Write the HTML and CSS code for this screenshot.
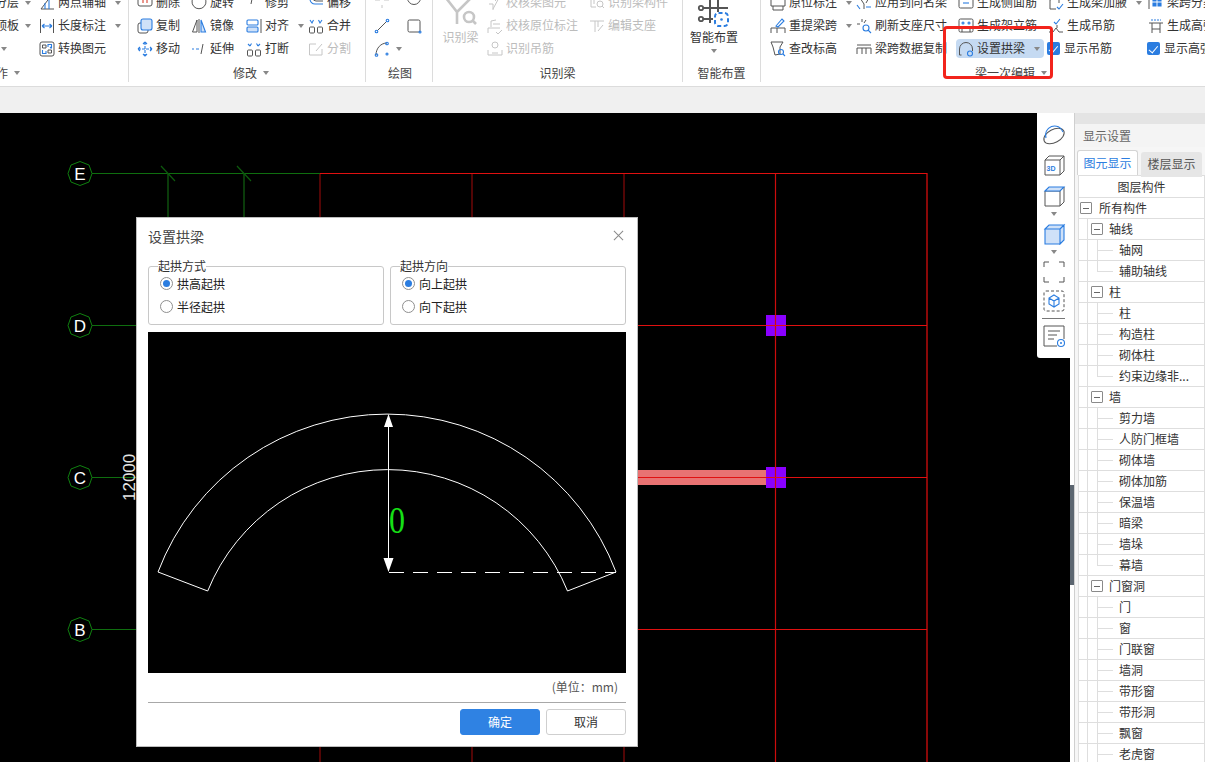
FILE: index.html
```html
<!DOCTYPE html>
<html lang="zh-CN">
<head>
<meta charset="utf-8">
<title>设置拱梁</title>
<link rel="stylesheet" href="styles.css">
</head>
<body>
<header class="ribbon">
  <div class="ribbon-body">

    <section class="group g1">
      <div class="cols">
        <div class="col c1a">
          <div class="item end"><span>分层</span><i class="caret"></i></div>
          <div class="item end"><span>顶板</span><i class="caret"></i></div>
          <div class="item end lone"><i class="caret"></i></div>
        </div>
        <div class="col">
          <div class="item"><svg class="ic" viewBox="0 0 16 16"><path class="s" d="M2 14L12 1M2 14H15"/><path class="b" d="M6 14V8M10 14V5"/></svg><span>两点辅轴</span><i class="caret"></i></div>
          <div class="item"><svg class="ic" viewBox="0 0 16 16"><path class="s" d="M1.500 1V15M14.500 1V15"/><path class="b" d="M3 8H13M3 8L5.500 6M3 8L5.500 10M13 8L10.500 6M13 8L10.500 10"/></svg><span>长度标注</span><i class="caret"></i></div>
          <div class="item"><svg class="ic" viewBox="0 0 16 16"><rect class="s" x="1" y="1" width="14" height="14" rx="2"/><path class="s" d="M3.500 4H7V7H3.500ZM9 9H12.500V12H9Z"/><path class="b" d="M9 6V3.500H12.500V7M11 6L12.500 7.500M7 10V12.500H3.500V9"/></svg><span>转换图元</span></div>
        </div>
      </div>
      <div class="glabel gl1"><span>操作</span><i class="caret"></i></div>
    </section>

    <section class="group g2">
      <div class="cols">
        <div class="col c2a">
          <div class="item"><svg class="ic" viewBox="0 0 16 16"><rect class="s" x="1" y="-3" width="14" height="14" rx="2"/><path class="r" d="M6 0V8M10 0V8"/></svg><span>删除</span></div>
          <div class="item"><svg class="ic" viewBox="0 0 16 16"><rect class="s" x="1" y="5" width="10" height="10" rx="2"/><rect class="b fb" x="4" y="1" width="11" height="11" rx="2"/></svg><span>复制</span></div>
          <div class="item"><svg class="ic" viewBox="0 0 16 16"><path class="b" d="M8 1V15M1 8H15M8 1L6 3M8 1L10 3M8 15L6 13M8 15L10 13M1 8L3 6M1 8L3 10M15 8L13 6M15 8L13 10" stroke-dasharray="3 1"/></svg><span>移动</span></div>
        </div>
        <div class="col c2b">
          <div class="item"><svg class="ic" viewBox="0 0 16 16"><path class="s" d="M4 1A7 7 0 1 0 12 1"/></svg><span>旋转</span></div>
          <div class="item"><svg class="ic" viewBox="0 0 16 16"><path class="s" d="M6 2L1.500 14H6Z"/><path class="b fb" d="M10 2L14.500 14H10Z"/><path class="s" d="M8 1V15"/></svg><span>镜像</span></div>
          <div class="item"><svg class="ic" viewBox="0 0 16 16"><path class="b" d="M1 8H3M5 8H8"/><path class="s" d="M12 3L10 13"/></svg><span>延伸</span></div>
        </div>
        <div class="col c2c">
          <div class="item"><svg class="ic" viewBox="0 0 16 16"><path class="s" d="M1 4H7M6 4L5 9"/><path class="b" d="M9 4H11M13 4H15"/></svg><span>修剪</span></div>
          <div class="item"><svg class="ic" viewBox="0 0 16 16"><rect class="b" x="1" y="2" width="11" height="5" rx="1"/><rect class="b fb" x="1" y="9" width="11" height="5" rx="1"/><path class="s" d="M15 1V15"/></svg><span>对齐</span><i class="caret"></i></div>
          <div class="item"><svg class="ic" viewBox="0 0 16 16"><path class="b" d="M4 5L2 3M4 5L5.500 2.500M12 5L14 3M12 5L10.500 2.500"/><rect class="s" x="1.500" y="9" width="5" height="6" rx="1"/><rect class="s" x="9.500" y="9" width="5" height="6" rx="1"/></svg><span>打断</span></div>
        </div>
        <div class="col">
          <div class="item"><svg class="ic" viewBox="0 0 16 16"><path class="b" d="M2 0V4A5 5 0 0 0 7 9H15"/><path class="s" d="M5 0V3A3 3 0 0 0 8 6H15"/></svg><span>偏移</span></div>
          <div class="item"><svg class="ic" viewBox="0 0 16 16"><path class="b" d="M2 2L4 5L5.500 2M10.500 2L12 5L14 2"/><rect class="s" x="1.500" y="9" width="5" height="6" rx="1"/><rect class="s" x="9.500" y="9" width="5" height="6" rx="1"/></svg><span>合并</span></div>
          <div class="item off"><svg class="ic" viewBox="0 0 16 16"><path class="d" d="M8 3H1.500V14H14V8M8 10L14 3"/></svg><span>分割</span></div>
        </div>
      </div>
      <div class="glabel"><span>修改</span><i class="caret"></i></div>
    </section>

    <section class="group g3">
      <div class="cols">
        <div class="col c3a">
          <div class="item"><svg class="ic" viewBox="0 0 16 16"><path class="d" d="M8 -2V4M8 10V13M1 5H6M10 5H15"/></svg></div>
          <div class="item"><svg class="ic" viewBox="0 0 16 16"><path class="s" d="M3 13L13 3"/><circle class="b" cx="2.500" cy="13.500" r="1.300"/><circle class="b" cx="13.500" cy="2.500" r="1.300"/></svg></div>
          <div class="item"><svg class="ic" viewBox="0 0 16 16"><path class="s" d="M2 14C2 7 7 2 13 2"/><circle class="b" cx="2.500" cy="14" r="1.300"/><circle class="b" cx="13" cy="2.500" r="1.300"/><circle class="b" cx="13" cy="13" r="1"/></svg><i class="caret arc-caret"></i></div>
        </div>
        <div class="col">
          <div class="item"><svg class="ic" viewBox="0 0 16 16"><circle class="s" cx="8" cy="3" r="6.500"/><circle class="b" cx="8" cy="3" r="1"/></svg></div>
          <div class="item"><svg class="ic" viewBox="0 0 16 16"><rect class="s" x="2" y="2" width="12" height="12" rx="1.500"/><circle class="b" cx="14" cy="14" r="1"/></svg></div>
        </div>
      </div>
      <div class="glabel gl3"><span>绘图</span></div>
    </section>

    <section class="group g4">
      <div class="cols">
        <div class="col big c4a off">
          <svg class="big-ic" viewBox="0 0 32 32"><path class="d2" d="M1 6L12 20V32M26 6L12 20"/><circle class="d2" cx="24" cy="25" r="5"/><path class="d2" d="M27.500 28.500L31 32"/></svg>
          <span class="big-label">识别梁</span>
        </div>
        <div class="col c4b off">
          <div class="item"><svg class="ic" viewBox="0 0 16 16"><path class="d" d="M3 0L9 6M13 1L6 14M2 9H6V15"/></svg><span>校核梁图元</span></div>
          <div class="item"><svg class="ic" viewBox="0 0 16 16"><path class="d" d="M1 15V10H13M4 9V3L9 2M6 6H13M9 14L11 16L15 12"/></svg><span>校核原位标注</span></div>
          <div class="item"><svg class="ic" viewBox="0 0 16 16"><circle class="d" cx="8" cy="4" r="3"/><path class="d" d="M1 9V14H15V9M5 12H11"/></svg><span>识别吊筋</span></div>
        </div>
        <div class="col off">
          <div class="item"><svg class="ic" viewBox="0 0 16 16"><path class="d" d="M2 0V12H7M5 0V9"/><circle class="d" cx="11" cy="9" r="3"/><path class="d" d="M13 11L15 13"/></svg><span>识别梁构件</span></div>
          <div class="item"><svg class="ic" viewBox="0 0 16 16"><path class="d" d="M1 3H15M6 3V14M9 3V9M9 13L14 7"/></svg><span>编辑支座</span></div>
        </div>
      </div>
      <div class="glabel"><span>识别梁</span></div>
    </section>

    <section class="group g5">
      <div class="cols">
        <div class="col big c5a">
          <svg class="big-ic" viewBox="0 0 32 32"><path class="s2" d="M12 -2V31M20 -2V21M2 16H30M2 27H15"/><circle class="sd" cx="3" cy="16" r="2.200"/><circle class="sd" cx="3" cy="27" r="2.200"/><rect class="wbox" x="16" y="20" width="15" height="14"/><rect class="b2" x="17" y="21" width="13" height="13" rx="3.500" stroke-dasharray="4 2.500"/><circle cx="23.500" cy="27.500" r="1.300" class="dot"/></svg>
          <span class="big-label dark">智能布置</span>
          <i class="caret big-caret"></i>
        </div>
      </div>
      <div class="glabel"><span>智能布置</span></div>
    </section>

    <section class="group g6">
      <div class="cols">
        <div class="col c6a">
          <div class="item"><svg class="ic" viewBox="0 0 16 16"><path class="s" d="M3 0H13L15 5V11H1V5ZM3 11V15H13V11"/></svg><span>原位标注</span><i class="caret"></i></div>
          <div class="item"><svg class="ic" viewBox="0 0 16 16"><path class="s" d="M1 15V10H15V15M7 10V15"/><path class="b" d="M6 8L12 1L14 3L8 9Z"/></svg><span>重提梁跨</span><i class="caret"></i></div>
          <div class="item"><svg class="ic" viewBox="0 0 16 16"><path class="s" d="M1 1H13L10 6V13L5 14L3 6Z"/><circle class="b" cx="11" cy="11" r="2.500"/><path class="b" d="M13 13L15 15"/></svg><span>查改标高</span></div>
        </div>
        <div class="col c6b">
          <div class="item"><svg class="ic" viewBox="0 0 16 16"><path class="s" d="M2 0L8 9V14M14 1L10 8"/><path class="b" d="M1 10L4 14M10 12L15 12"/></svg><span>应用到同名梁</span></div>
          <div class="item"><svg class="ic" viewBox="0 0 16 16"><path class="s" d="M1 6H4M6 1V4M10 2L8 5"/><circle class="b" cx="10" cy="10" r="3"/><path class="b" d="M12 12L15 15"/></svg><span>刷新支座尺寸</span></div>
          <div class="item"><svg class="ic" viewBox="0 0 16 16"><path class="s" d="M1 13V7H15V13M1 4H15M6 7V13M10 7V13"/></svg><span>梁跨数据复制</span></div>
        </div>
        <div class="col c6c">
          <div class="item"><svg class="ic" viewBox="0 0 16 16"><rect class="s" x="1" y="-3" width="14" height="16" rx="1.500"/><path class="b" d="M5 8H11"/></svg><span>生成侧面筋</span></div>
          <div class="item"><svg class="ic" viewBox="0 0 16 16"><rect class="s" x="1" y="1" width="14" height="13" rx="1.500"/><circle class="b" cx="5" cy="5" r="1"/><circle class="b" cx="11" cy="5" r="1"/><path class="s" d="M4 14V10H12V14"/></svg><span>生成架立筋</span></div>
          <div class="item active"><svg class="ic" viewBox="0 0 16 16"><path class="s" d="M1.500 14V8A6.500 6.500 0 0 1 14.500 8V10"/><path class="s" d="M1.500 14H3.500"/><circle class="b" cx="12" cy="12.500" r="2.500"/></svg><span>设置拱梁</span><i class="caret"></i></div>
        </div>
        <div class="col c6d">
          <div class="item"><svg class="ic" viewBox="0 0 16 16"><path class="s" d="M2 0V14H8M2 5L11 0M11 5V8"/><path class="b" d="M9 12L11 14L15 9"/></svg><span>生成梁加腋</span><i class="caret"></i></div>
          <div class="item"><svg class="ic" viewBox="0 0 16 16"><path class="b" d="M6 4L8 6L12 1"/><path class="s" d="M9 7V10M1 14H5L8 10L11 14H15"/></svg><span>生成吊筋</span></div>
          <div class="item"><i class="check"></i><span>显示吊筋</span></div>
        </div>
        <div class="col">
          <div class="item"><svg class="ic" viewBox="0 0 16 16"><path class="s" d="M1 0V14"/><path class="b fbb" d="M5 3H8V6H5ZM10 3H13V6H10ZM5 8H8V11H5ZM10 8H13V11H10Z"/></svg><span>梁跨分类</span></div>
          <div class="item"><svg class="ic" viewBox="0 0 16 16"><path class="s" d="M1 5H15M4 5V15M12 5V15M4 11H12"/><path class="b" d="M3 2H13" stroke-dasharray="2 1"/></svg><span>生成高强筋</span></div>
          <div class="item"><i class="check"></i><span>显示高强筋</span></div>
        </div>
      </div>
      <div class="glabel gl6"><span>梁一次编辑</span><i class="caret"></i></div>
    </section>

  </div>
  <div class="callout"></div>
</header>

<div class="strip"></div>

<main class="main">
  <div class="canvas">
    <svg class="cad" viewBox="0 113 1070 649">
      <path class="red-v" d="M320 173V762M472 173V762M624 173V762"/>
      <path class="red-c" d="M775.500 173V762"/>
      <path class="edge" d="M927 173V762"/>
      <path class="red-h" d="M320 173.500H927M320 325.500H927M320 477.500H927M320 629.500H927"/>
      <path class="grid" d="M92 173.500H320M92 325.500H320M92 477.500H320M92 629.500H320"/>
      <path class="col-g" d="M168 173V217M244 173V217"/>
      <path class="tick" d="M161 166L175 181M237 166L251 181"/>
      <rect class="beam" x="637" y="470" width="130" height="15"/>
      <path class="red-h" d="M637 477.500H767"/>
      <rect class="pillar" x="766" y="315" width="20" height="21"/>
      <rect class="pillar" x="766" y="467" width="20" height="21"/>
      <path class="red-c" d="M775.500 315V336M775.500 467V488"/>
      <path class="red-h" d="M766 325.500H786M766 477.500H786"/>
      <g class="bubble">
        <polygon points="80,161.500 89,165 92,173.500 89,182 80,185.500 71,182 68,173.500 71,165"/>
        <polygon points="80,313.500 89,317 92,325.500 89,334 80,337.500 71,334 68,325.500 71,317"/>
        <polygon points="80,465.500 89,469 92,477.500 89,486 80,489.500 71,486 68,477.500 71,469"/>
        <polygon points="80,617.500 89,621 92,629.500 89,638 80,641.500 71,638 68,629.500 71,621"/>
      </g>
      <g class="axis-text">
        <text x="80" y="179.500">E</text>
        <text x="80" y="331.500">D</text>
        <text x="80" y="483.500">C</text>
        <text x="80" y="635.500">B</text>
      </g>
      <text class="dim" transform="translate(135 501) rotate(-90)">12000</text>
    </svg>

    <aside class="viewbar">
      <svg class="vb" viewBox="0 0 24 24"><ellipse class="s" cx="12" cy="12" rx="11" ry="6.500" transform="rotate(-28 12 12)"/><path class="b" d="M4 14A9 9 0 0 1 21 8"/></svg>
      <svg class="vb" viewBox="0 0 24 24"><path class="s" d="M3 7H18V22H3ZM3 7L7 3H22V18L18 22M18 7L22 3"/><text class="t3d" x="4.500" y="18">3D</text></svg>
      <svg class="vb tb-gap" viewBox="0 0 24 24"><path class="s" d="M3 8H18V23H3ZM18 23L22 19V4L18 8"/><path class="b fb" d="M3 8L7 4H22L18 8Z"/></svg>
      <i class="caret vb-caret"></i>
      <svg class="vb" viewBox="0 0 24 24"><path class="b fb" d="M3 8H18V23H3ZM18 23L22 19V4L18 8ZM3 8L7 4H22L18 8Z"/></svg>
      <i class="caret vb-caret"></i>
      <svg class="vb tb-gap" viewBox="0 0 24 24"><path class="s" d="M7 2H2V7M17 2H22V7M2 17V22H7M22 17V22H17"/></svg>
      <svg class="vb" viewBox="0 0 24 24"><rect class="s" x="2" y="2" width="20" height="20" rx="2" stroke-dasharray="3 2"/><path class="b" d="M12 6L17 9V15L12 18L7 15V9ZM7 9L12 12L17 9M12 12V18"/></svg>
      <hr class="vb-sep">
      <svg class="vb" viewBox="0 0 24 24"><path class="s" d="M15 22H2V2H22V15M6 7H18M6 11H15M6 15H12"/><circle class="b" cx="19" cy="19" r="3.500"/><circle class="dot" cx="19" cy="19" r="1"/></svg>
    </aside>

    <div class="dialog">
      <div class="dlg-title">
        <span>设置拱梁</span>
        <svg class="close" viewBox="0 0 12 12"><path d="M1 1L11 11M11 1L1 11"/></svg>
      </div>
      <div class="dlg-options">
        <fieldset class="opt">
          <legend>起拱方式</legend>
          <label class="radio"><i class="dotbox on"></i>拱高起拱</label>
          <label class="radio"><i class="dotbox"></i>半径起拱</label>
        </fieldset>
        <fieldset class="opt">
          <legend>起拱方向</legend>
          <label class="radio"><i class="dotbox on"></i>向上起拱</label>
          <label class="radio"><i class="dotbox"></i>向下起拱</label>
        </fieldset>
      </div>
      <svg class="preview" viewBox="148 332 478 341">
        <path class="w" d="M158 572A245 245 0 0 1 616 572L567.500 591A194 194 0 0 0 207.700 591Z"/>
        <path class="w" d="M388.500 416V560"/>
        <path class="wf" d="M388.500 414L393 427H384ZM388.500 572L383.500 558H393.500Z"/>
        <path class="w" d="M389 572.500H616" stroke-dasharray="15 9"/>
        <text class="zero" x="389" y="533" textLength="16" lengthAdjust="spacingAndGlyphs">0</text>
      </svg>
      <div class="dlg-unit">(单位：mm)</div>
      <div class="dlg-foot">
        <button class="btn primary" type="button">确定</button>
        <button class="btn" type="button">取消</button>
      </div>
    </div>
  </div>

  <aside class="panel">
    <i class="handle"></i>
    <div class="panel-in">
      <div class="panel-top"></div>
      <div class="panel-title">显示设置</div>
      <div class="tabs">
        <div class="tab on">图元显示</div>
        <div class="tab">楼层显示</div>
      </div>
      <div class="tree">
        <div class="thead">图层构件</div>
        <div class="row l0"><i class="minus"></i>所有构件</div>
        <div class="row l1"><i class="minus"></i>轴线</div>
        <div class="row l2">轴网</div>
        <div class="row l2 last">辅助轴线</div>
        <div class="row l1"><i class="minus"></i>柱</div>
        <div class="row l2">柱</div>
        <div class="row l2">构造柱</div>
        <div class="row l2">砌体柱</div>
        <div class="row l2 last">约束边缘非...</div>
        <div class="row l1"><i class="minus"></i>墙</div>
        <div class="row l2">剪力墙</div>
        <div class="row l2">人防门框墙</div>
        <div class="row l2">砌体墙</div>
        <div class="row l2">砌体加筋</div>
        <div class="row l2">保温墙</div>
        <div class="row l2">暗梁</div>
        <div class="row l2">墙垛</div>
        <div class="row l2 last">幕墙</div>
        <div class="row l1"><i class="minus"></i>门窗洞</div>
        <div class="row l2">门</div>
        <div class="row l2">窗</div>
        <div class="row l2">门联窗</div>
        <div class="row l2">墙洞</div>
        <div class="row l2">带形窗</div>
        <div class="row l2">带形洞</div>
        <div class="row l2">飘窗</div>
        <div class="row l2">老虎窗</div>
      </div>
    </div>
  </aside>
</main>
</body>
</html>
```

FILE: styles.css
```css
* { box-sizing: border-box; }
html, body { margin: 0; padding: 0; width: 1205px; height: 762px; overflow: hidden; }
body { font: 12px/18px "Noto Sans CJK SC", "Noto Sans", sans-serif; color: #333; background: #fff; }
i { font-style: normal; }

/* shared stroke styles */
svg path, svg rect, svg circle, svg ellipse, svg polygon { fill: none; }
.s { stroke: #555; stroke-width: 1; }
.b { stroke: #2b7de0; stroke-width: 1.100; }
.r { stroke: #d8402f; stroke-width: 1.100; }
.d { stroke: #c6c6c6; stroke-width: 1; }
.d2 { stroke: #c6c6c6; stroke-width: 2.600; }
.s2 { stroke: #555; stroke-width: 2; }
.b2 { stroke: #2b7de0; stroke-width: 2; }
svg .sd { fill: #fff; stroke: #555; stroke-width: 1.800; }
svg .wbox { fill: #fff; }
svg .fb { fill: #cfe1f8; }
svg .fbb { fill: #2b7de0; }
svg .dot { fill: #2b7de0; }

.caret { display: block; width: 0; height: 0; margin-left: 6px; flex: none;
  border-left: 3.500px solid transparent; border-right: 3.500px solid transparent; border-top: 4px solid #888; }

/* ribbon */
.ribbon { position: relative; height: 87px; background: #fff; border-bottom: 1px solid #dcdcdc; overflow: hidden; }
.ribbon-body { display: flex; height: 91px; margin-top: -9px; white-space: nowrap; }
.group { display: flex; flex-direction: column; height: 91px; border-right: 1px solid #dcdcdc; flex: none; }
.cols { display: flex; height: 69px; flex: none; }
.col { display: flex; flex-direction: column; flex: none; }
.item { display: flex; align-items: center; gap: 3px; height: 23px; flex: none; }
.item span { margin-bottom: 2px; }
.ic { width: 16px; height: 16px; flex: none; overflow: visible; }
.off { color: #bcbcbc; }
.glabel { display: flex; justify-content: center; align-items: center; height: 18px; margin-top: 4px; color: #444; }

.g1 { width: 129px; }
.c1a { width: 39px; padding-right: 8px; }
.item.end { justify-content: flex-end; gap: 0; margin-left: -20px; }
.item.lone { margin-right: 24px; }
.gl1 { justify-content: flex-start; margin-left: -16px; }

.g2 { width: 237px; padding-left: 8px; }
.c2a { width: 54px; }
.c2b { width: 55px; }
.c2c { width: 62px; }

.g3 { width: 67px; padding-left: 8px; }
.c3a { width: 32px; }
.arc-caret { margin-left: 3px; }
.gl3 { padding-left: 2px; padding-right: 8px; }

.g4 { width: 250px; }
.big { align-items: center; }
.big-ic { width: 32px; height: 32px; margin-top: 1px; flex: none; overflow: visible; }
.big-label { height: 18px; margin-top: 4px; }
.big-label.dark { color: #333; }
.big-caret { margin: 3px 0 0; }
.c4a { width: 55px; }
.c4b { width: 101px; }
.c4b .item { margin-left: -1px; }

.g5 { width: 78px; }
.c5a { width: 62px; }

.g6 { flex: 1; min-width: 0; border-right: 0; padding-left: 9px; }
.c6a { width: 86px; }
.c6b { width: 102px; }
.c6c { width: 90px; }
.c6d { width: 100px; }
.item.active { align-self: flex-start; height: 19px; margin: 2px 0 2px -2px; padding: 0 4px 0 2px; background: #c5daf2; border-radius: 4px; }
.check { position: relative; width: 13px; height: 13px; margin-left: -1px; margin-right: 1px; background: #2b7de0; border-radius: 2px; flex: none; }
.check::after { content: ""; position: absolute; left: 4px; top: 1.500px; width: 4px; height: 7.500px; border: solid #fff; border-width: 0 1.600px 1.600px 0; transform: rotate(40deg); }
.gl6 { justify-content: flex-start; padding-left: 205px; }

.callout { position: absolute; left: 943px; top: 26px; width: 110px; height: 53px; border: 3px solid #f2241c; border-radius: 4px; }

.strip { height: 26px; background: #f0f0f0; }

/* workspace */
.main { display: flex; height: 649px; }
.canvas { position: relative; width: 1070px; height: 649px; background: #000; overflow: hidden; flex: none; }
.cad { display: block; width: 1070px; height: 649px; }
.red-v { stroke: #a30b0b; stroke-width: 1; }
.red-c { stroke: #cc0c0c; stroke-width: 1.200; }
.red-h { stroke: #e01010; stroke-width: 1; }
.edge { stroke: #8a0808; stroke-width: 2; }
.grid { stroke: #0f6e0f; stroke-width: 1; }
.col-g { stroke: #0d4a0d; stroke-width: 1.600; }
.tick { stroke: #0d5a0d; stroke-width: 1.200; }
svg .beam { fill: #e87272; }
svg .pillar { fill: #8a00ff; }
.bubble polygon { stroke: #108010; stroke-width: 1; }
.axis-text text { fill: #fff; font: 17px "Liberation Sans", sans-serif; text-anchor: middle; }
.dim { fill: #e4e4e4; font: 17px "Liberation Sans", sans-serif; }

.viewbar { position: absolute; left: 1037px; top: 0; width: 33px; height: 245px; padding-top: 11px; background: #fff; border-bottom-left-radius: 3px;
  display: flex; flex-direction: column; align-items: center; gap: 5px; }
.vb { width: 24px; height: 24px; flex: none; }
.tb-gap { margin-top: 1px; }
.vb-caret { margin: 0; }
.vb-sep { width: 23px; height: 1px; margin: 0; border: 0; background: #777; flex: none; }
.t3d { fill: #2b7de0; font: 700 7px "Liberation Sans", sans-serif; }

/* dialog */
.dialog { position: absolute; left: 136px; top: 104px; width: 502px; height: 530px; padding: 0 11px; background: #fff; border: 1px solid #bdbdbd; display: flex; flex-direction: column; }
.dlg-title { display: flex; justify-content: space-between; align-items: center; height: 39px; padding: 0 1px 4px 0; flex: none; font-size: 14px; color: #444; }
.close { width: 11px; height: 11px; margin-right: 1px; }
.close path { stroke: #8a8a8a; stroke-width: 1.100; }
.dlg-options { display: flex; gap: 6px; height: 68px; flex: none; }
.opt { width: 236px; height: 68px; margin: 0; padding: 0 9px 0 11px; border: 1px solid #c8c8c8; border-radius: 3px; display: flex; flex-direction: column; }
.opt legend { padding: 0; margin-left: -2px; height: 18px; line-height: 18px; color: #333; }
.radio { display: flex; align-items: center; gap: 4px; height: 23px; flex: none; color: #222; }
.radio:first-of-type { margin-top: -3px; }
.dotbox { position: relative; width: 13px; height: 13px; border: 1px solid #8f8f8f; border-radius: 50%; flex: none; }
.dotbox.on::after { content: ""; position: absolute; left: 2px; top: 2px; width: 7px; height: 7px; border-radius: 50%; background: #2b7de0; }
.preview { display: block; width: 478px; height: 341px; margin-top: 7px; flex: none; background: #000; }
.w { stroke: #fff; stroke-width: 1; }
svg .wf { fill: #fff; }
.zero { fill: #16e016; font: 38px "Liberation Serif", serif; }
.dlg-unit { height: 29px; line-height: 28px; text-align: right; padding-right: 8px; color: #555; flex: none; }
.dlg-foot { display: flex; justify-content: flex-end; gap: 6px; padding-top: 6px; border-top: 1px solid #a8a8a8; flex: none; }
.btn { width: 80px; height: 26px; padding: 0; font: inherit; color: #333; background: #fff; border: 1px solid #cfcfcf; border-radius: 3px; }
.btn.primary { color: #fff; background: #2f82e3; border-color: #2f82e3; }

/* right panel */
.panel { position: relative; width: 135px; height: 649px; padding-left: 4px; background: #fff; flex: none; overflow: hidden; }
.handle { position: absolute; left: 0; top: 372px; width: 4px; height: 100px; background: #5c6670; }
.panel-in { height: 649px; border-left: 1px solid #cfcfcf; background: #f6f6f6; }
.panel-top { height: 11px; background: #e4e4e4; }
.panel-title { height: 23px; line-height: 23px; padding-left: 8px; color: #666; font-size: 12px; background: #f4f4f4; }
.tabs { display: flex; gap: 3px; height: 28px; padding: 3px 0 0 2px; }
.tab { width: 61px; height: 25px; line-height: 23px; text-align: center; color: #555; background: #e6e6e6; border-radius: 3px 3px 0 0; margin-top: 2px; }
.tab.on { color: #2b7de0; background: #fff; border: 1px solid #d4d4d4; border-bottom: 0; margin-top: 0; }
.tree { width: 127px; margin-left: 3px; height: 600px; background: #fff linear-gradient(#dedede, #dedede) 8px 22px / 1px 100% no-repeat; border-left: 1px solid #dedede; border-top: 1px solid #dedede; border-right: 1px solid #dedede; }
.thead { height: 22px; line-height: 21px; text-align: center; border-bottom: 1px solid #dedede; background: #fff; }
.row { position: relative; display: flex; align-items: center; height: 21px; border-bottom: 1px solid #dedede; white-space: nowrap; color: #333; }
.minus { position: relative; width: 12px; height: 12px; border: 1px solid #8a8a8a; border-radius: 1px; flex: none; background: #fff; }
.minus::after { content: ""; position: absolute; left: 2px; right: 2px; top: 4.500px; height: 1px; background: #666; }
.l0 { padding-left: 1px; gap: 7px; background: #fff; }
.l1 { padding-left: 12px; gap: 6px; }
.l2 { padding-left: 18px; gap: 6px; }
.l2::before { content: ""; width: 16px; height: 1px; background: #dedede; flex: none; }
.l2::after { content: ""; position: absolute; left: 18px; top: 0; bottom: 0; width: 1px; background: #dedede; }
.l2.last::after { bottom: 50%; }
```
